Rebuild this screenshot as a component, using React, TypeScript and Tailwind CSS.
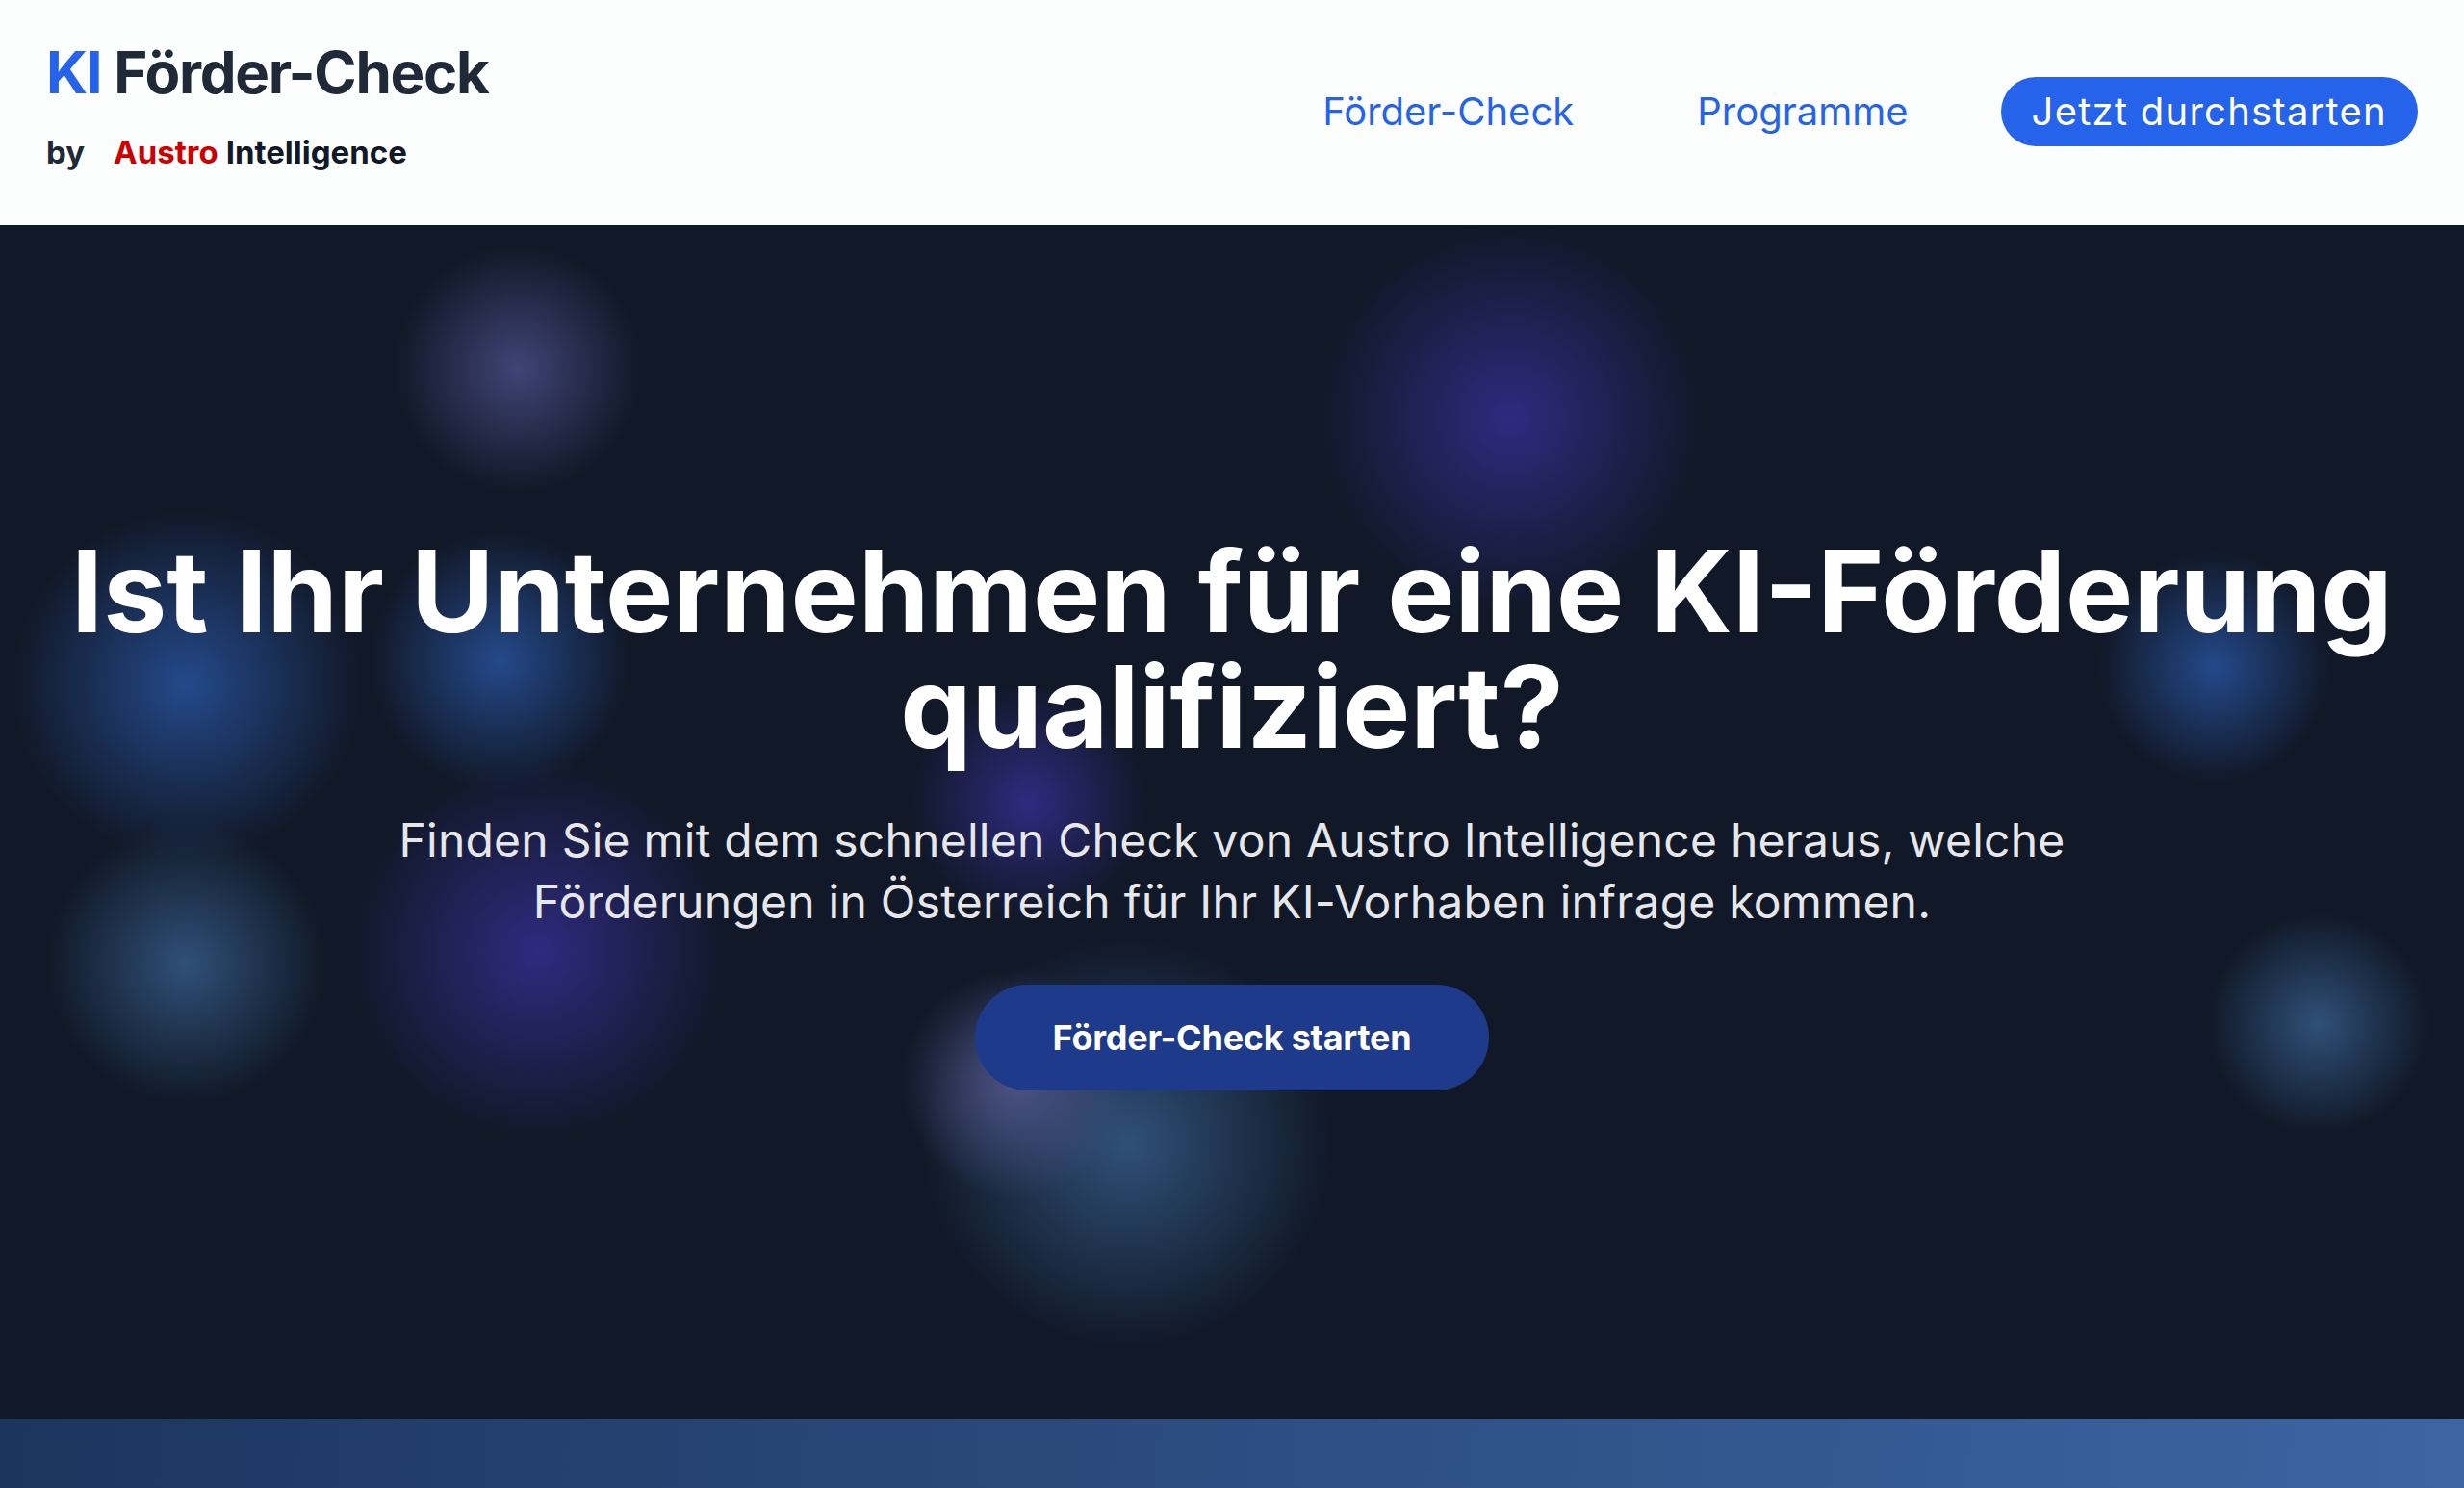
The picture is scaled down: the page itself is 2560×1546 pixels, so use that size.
import React from 'react';

const GROTESK = "font-['Inter','Liberation_Sans',sans-serif]";

// Decorative glow spots behind the hero text
const glows = [
  'left-[408px] top-[19px] w-[260px] h-[260px] bg-[radial-gradient(circle,#404476,rgba(64,68,118,0)_70%)]',
  'left-[1364px] top-[-4px] w-[410px] h-[410px] bg-[radial-gradient(circle,#2e2b80,rgba(46,43,128,0)_70%)]',
  'left-[9px] top-[292px] w-[370px] h-[370px] bg-[radial-gradient(circle,#24498a,rgba(36,73,138,0)_70%)]',
  'left-[382px] top-[315px] w-[275px] h-[275px] bg-[radial-gradient(circle,#24498a,rgba(36,73,138,0)_70%)]',
  'left-[2178px] top-[336px] w-[245px] h-[245px] bg-[radial-gradient(circle,#24498a,rgba(36,73,138,0)_70%)]',
  'left-[944px] top-[474px] w-[250px] h-[250px] bg-[radial-gradient(circle,#2e2b80,rgba(46,43,128,0)_70%)]',
  'left-[46px] top-[620px] w-[295px] h-[295px] bg-[radial-gradient(circle,#2f5078,rgba(47,80,120,0)_70%)]',
  'left-[359px] top-[555px] w-[400px] h-[400px] bg-[radial-gradient(circle,#2e2b80,rgba(46,43,128,0)_70%)]',
  'left-[2291px] top-[712px] w-[235px] h-[235px] bg-[radial-gradient(circle,#2f5078,rgba(47,80,120,0)_70%)]',
  'left-[954px] top-[736px] w-[435px] h-[435px] bg-[radial-gradient(circle,#2f5078,rgba(47,80,120,0)_70%)]',
  'left-[935px] top-[771px] w-[240px] h-[240px] bg-[radial-gradient(circle,rgba(79,84,136,0.95),rgba(79,84,136,0)_70%)]',
];

export default function App() {
  return (
    <div className="w-full h-[1546px] overflow-hidden flex flex-col bg-[#111827]">
      {/* Header */}
      <header className="h-[234px] shrink-0 bg-[#fcfdfd] flex items-center justify-between px-[48px]">
        <div className="flex flex-col mb-[17px]">
          <div className="text-[60px] leading-[72px] font-bold text-[#1f2937] font-['Inter',sans-serif] tracking-[-1.3px]">
            <span className="text-[#2563eb]">KI</span> Förder-Check
          </div>
          <div className="flex items-center mt-[27px] text-[33px] leading-[40px] font-bold">
            <span className={`${GROTESK} text-[#1f2937] w-[70px]`}>by</span>
            <span className="font-['Inter',sans-serif] text-[#cc0000]">Austro</span>
            <span className="font-['Inter',sans-serif] text-[#111827] ml-[8px]">Intelligence</span>
          </div>
        </div>
        <nav className={`${GROTESK} flex items-center mb-[2px] text-[40px] text-[#2563eb]`}>
          <a className="mr-[128px]">Förder-Check</a>
          <a className="mr-[96px]">Programme</a>
          <a className="h-[72px] px-[32px] rounded-full bg-[#2563eb] text-white flex items-center tracking-[1.25px]">Jetzt durchstarten</a>
        </nav>
      </header>

      {/* Hero */}
      <main className="relative flex-1 flex flex-col items-center justify-center overflow-hidden bg-[#111827] pb-[21px]">
        {glows.map((c) => (
          <div key={c} className={`absolute rounded-full ${c}`} />
        ))}
        <div className={`${GROTESK} relative flex flex-col items-center text-center`}>
          <h1 className="w-[2480px] text-[118px] leading-[120px] font-bold text-white">
            Ist Ihr Unternehmen für eine KI-Förderung qualifiziert?
          </h1>
          <p className="w-[1800px] mt-[47px] text-[48px] leading-[64px] text-[#e5e7eb] tracking-[0.24px]">
            Finden Sie mit dem schnellen Check von Austro Intelligence heraus, welche Förderungen in Österreich für Ihr KI-Vorhaben infrage kommen.
          </p>
          <a className="mt-[54px] h-[110px] w-[534px] rounded-full bg-[#1e3a8a] text-white text-[36px] font-bold tracking-[-0.25px] flex items-center justify-center">
            Förder-Check starten
          </a>
        </div>
      </main>

      {/* Next section peek */}
      <div className="h-[72px] shrink-0 bg-[linear-gradient(95deg,#1c355f,#3c65a2)]" />
    </div>
  );
}
